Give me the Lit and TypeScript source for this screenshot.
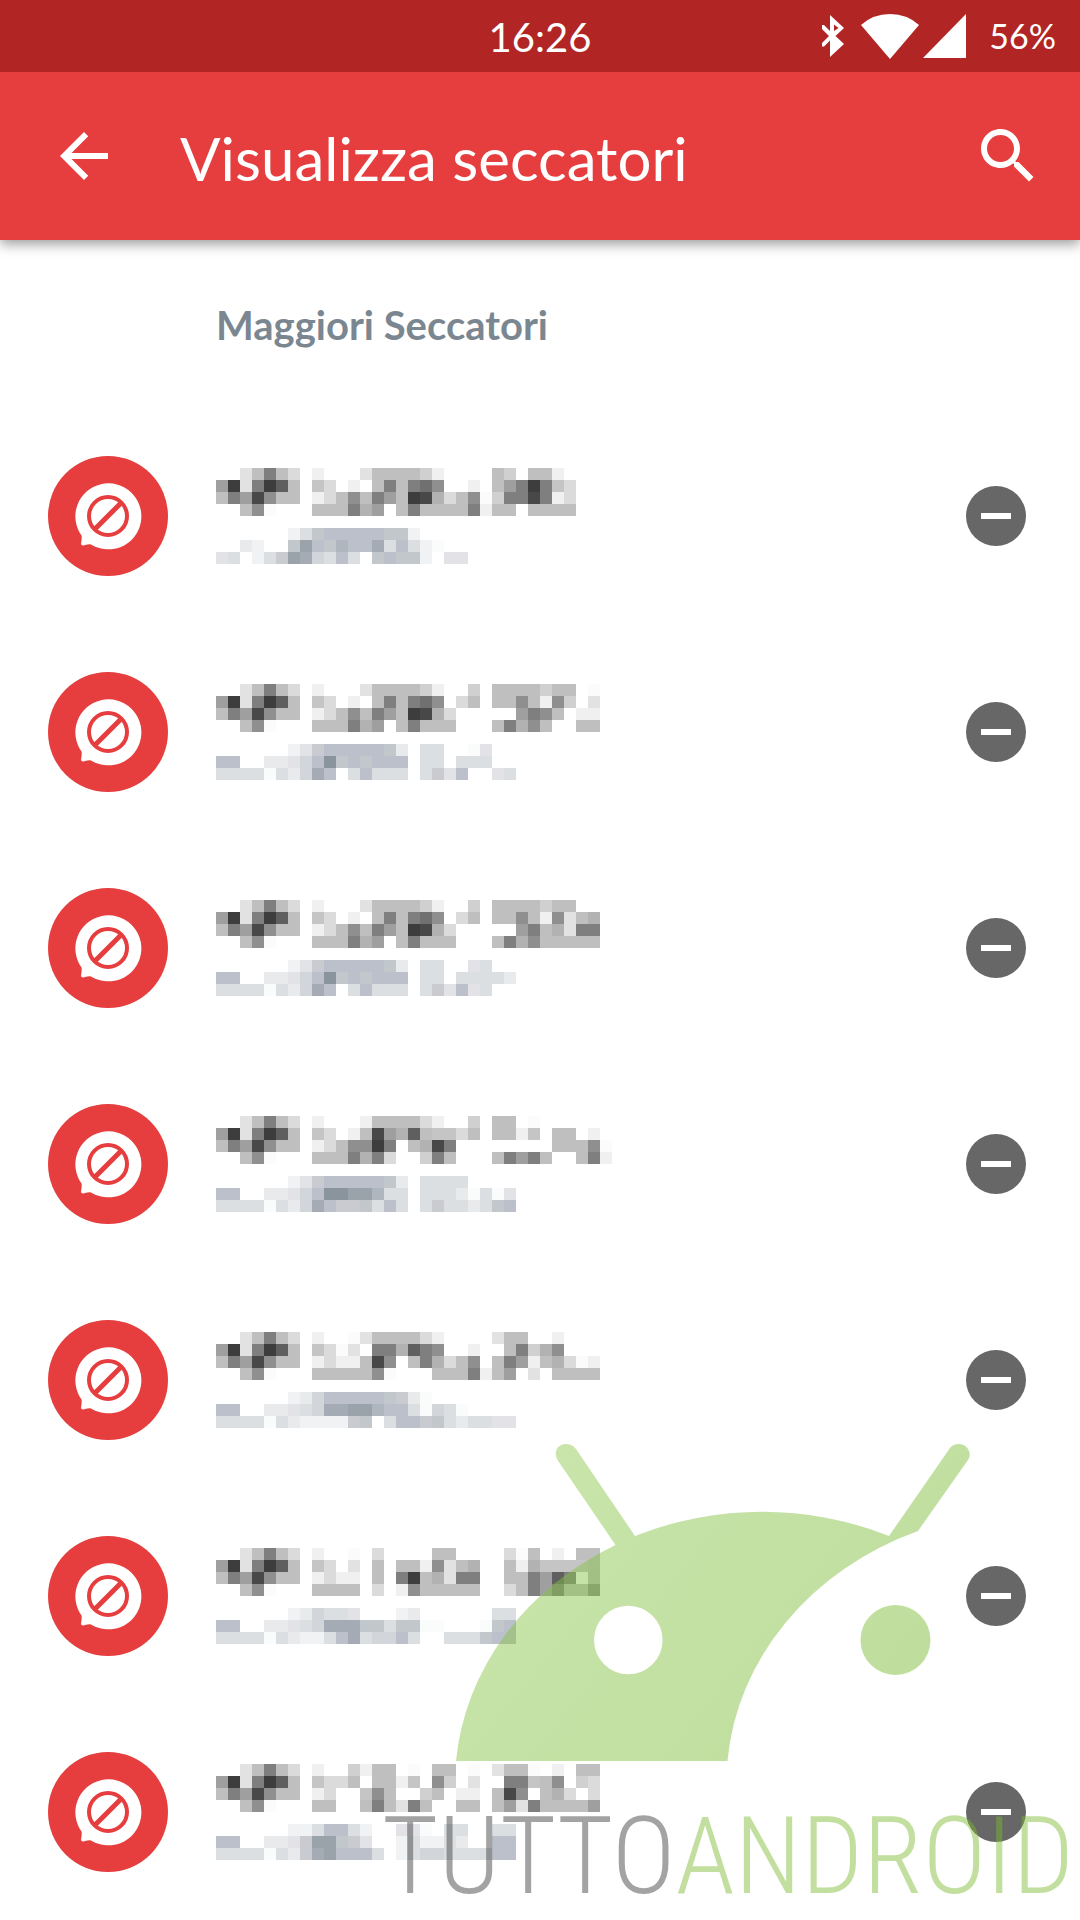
import { LitElement, html, svg, css } from "lit";
import { customElement, property } from "lit/decorators.js";

interface Blocked {
  name: string[];
  detail: string[];
}

const GREYS: Record<string, string> = {
  "1": "#fbfbfb", "2": "#f0f0f0", "3": "#e2e2e2", "4": "#dbdbdb", "5": "#d0d0d0",
  "6": "#c5c5c5", "7": "#bfbfbf", "8": "#b2b2b2", "9": "#9f9f9f", A: "#8f8f8f",
  B: "#7f7f7f", C: "#707070", D: "#5f5f5f", E: "#484848", F: "#3d3d3d",
};

const SLATES: Record<string, string> = {
  "1": "#fafcfb", "2": "#f1f2f4", "3": "#e9eaec", "4": "#e2e2e7", "5": "#dbdfe2",
  "6": "#d2d6da", "7": "#c9cbd0", "8": "#c2c7cb", "9": "#bbc0ca", A: "#b0b6bd",
  B: "#a4abb4", C: "#9aa2aa", D: "#8a949d",
};

/* Every number opens with the same country prefix. */
const PREFIX = ["..37B74.", "9F3BFD7.", "7B9EA77.", "..7A1..."];

const BLOCKED: Blocked[] = [
  {
    name: ["2...3777752....75.772.", "64.2.7B7BCA..2.79BFB64", "247A7B97FE847A15BBEB24", "777B89.7B7777B277.7777"],
    detail: ["......25899999882", "..32..8C98A99B59521", "45.257CB6595.89882.44"],
  },
  {
    name: ["2...3777752..5.7777577.1", "64.2.7B7BCA.47.77A72A5.3", "247A7B97FE84.....9BA7.22", "777B89.7B777...7B8A7..77"],
    detail: ["......2479999983.55..14", "99..33469D898999.55.555", "55551536B9.59555.5749..45"],
  },
  {
    name: ["2...3777752..5.7777577..", "64.2.7B7BCA.47.77A72A378", "247A7B97FE84.....9B783BB", "777B89.7B777...7B8A77777"],
    detail: ["......2479999983.55..45", "99..33469D898999.55.55553", "55551536B9.59555.574945"],
  },
  {
    name: ["2...2777742..5.77.1", "64.27E98D76647.7726.77.2", "247AAFB.78EB........777A1", "777B8B4..5B7...7B9B7..7B2"],
    detail: ["......2479999983.5555", "99..33469DDCCA55.55531514", "55551536B9778595.57553589"],
  },
  {
    name: ["2..13777742....377..2", "6413.BB8DBA..2..7B58A", "24227EA.7B847A.7B9278412", "77777A1...777B279.3.7777"],
    detail: ["......236999998731", "99..33456BBCCA9951651", "5555153222278.59978535544"],
  },
  {
    name: ["2..1.4....77....417.2.77", "64.3.7.772A378..72866667", "2422.7.BF783BB..77B9DB.7", "7777.4.2A77777..47B9B77A"],
    detail: ["......236554...23......55", "99..33456BBB8858811...189", "55551532259B56695..555899"],
  },
  {
    name: ["2..5277.1.77.1.3771.2.77", "6447.7726.A5.3..BB67A.54", "24..6A7..57.22.7EA.784.4", "77..7B73B7..77.793B77779"],
    detail: ["......2259952..441.55..55", "99..3347CC874..252253..99", "55551537BC9995.2566555599"],
  },
];

/* A censored line of text, drawn as square cells of flat colour. */
@customElement("mosaic-line")
export class MosaicLine extends LitElement {
  @property({ attribute: false }) rows: string[] = [];
  @property({ attribute: false }) palette: Record<string, string> = {};

  static styles = css`
    :host {
      display: block;
      line-height: 0;
    }
  `;

  render() {
    const columns = Math.max(...this.rows.map((row) => row.length));
    const height = this.rows.length;
    return html`<svg
      width=${columns * 12}
      height=${height * 12}
      viewBox="0 0 ${columns} ${height}"
      shape-rendering="crispEdges"
      aria-hidden="true"
    >
      ${this.rows.map((row, y) =>
        [...row].map((cell, x) =>
          this.palette[cell]
            ? svg`<rect x=${x} y=${y} width="1" height="1" fill=${this.palette[cell]} />`
            : null
        )
      )}
    </svg>`;
  }
}

@customElement("status-bar")
export class StatusBar extends LitElement {
  static styles = css`
    :host {
      display: grid;
      grid-template-columns: 1fr auto 1fr;
      align-items: center;
      position: relative;
      z-index: 1;
      height: 72px;
      padding: 0 24px;
      background: #b12625;
      color: #fff;
    }
    .clock {
      grid-column: 2;
      padding-top: 2px;
      font-size: 40px;
      line-height: 48px;
    }
    .system {
      display: flex;
      justify-content: flex-end;
      align-items: center;
      gap: 23px;
    }
    .system svg {
      display: block;
      fill: #fff;
    }
    .battery {
      font-size: 34px;
      line-height: 40px;
    }
  `;

  render() {
    return html`
      <time class="clock">16:26</time>
      <div class="system">
        <svg width="144" height="48" viewBox="822 12 144 48" aria-hidden="true">
          <path
            fill-rule="evenodd"
            d="M830 15L844 28L835.5 36L844 44L830 57V40.500L824 46.500H822V43L829 36L822 29V25H824L830 31ZM834 24.500V31L838.500 28Z"
          />
          <path d="M861 25Q873 14 890 14Q907 14 919 25L890 59Z" />
          <path d="M923 58L966 14V58Z" />
        </svg>
        <span class="battery">56%</span>
      </div>
    `;
  }
}

@customElement("top-bar")
export class TopBar extends LitElement {
  static styles = css`
    :host {
      display: flex;
      align-items: center;
      height: 168px;
      padding: 0 36px 0 48px;
      box-sizing: border-box;
      background: #e63e3e;
      color: #fff;
      box-shadow: 0 4px 12px rgba(0, 0, 0, 0.4);
    }
    .action {
      flex: none;
      padding: 0;
      border: 0;
      background: none;
      cursor: pointer;
    }
    .action svg {
      display: block;
      fill: #fff;
    }
    .title {
      flex: 1;
      margin: 0 0 0 60px;
      padding-top: 4px;
      font-size: 60px;
      font-weight: 400;
      line-height: 72px;
    }
  `;

  render() {
    return html`
      <button class="action" aria-label="Indietro">
        <svg width="72" height="72" viewBox="0 0 24 24">
          <path d="M20 11H7.830l5.590-5.590L12 4l-8 8 8 8 1.410-1.410L7.830 13H20z" />
        </svg>
      </button>
      <h1 class="title">Visualizza seccatori</h1>
      <button class="action" aria-label="Cerca">
        <svg width="72" height="72" viewBox="0 0 24 24">
          <path
            d="M15.500 14h-.79l-.28-.27C15.410 12.590 16 11.110 16 9.500 16 5.910 13.090 3 9.500 3S3 5.910 3 9.500 5.910 16 9.500 16c1.610 0 3.090-.59 4.230-1.570l.27.28v.79l5 4.990L20.490 19l-4.990-5zm-6 0C7.010 14 5 11.990 5 9.500S7.010 5 9.500 5 14 7.010 14 9.500 11.990 14 9.500 14z"
          />
        </svg>
      </button>
    `;
  }
}

@customElement("blocked-row")
export class BlockedRow extends LitElement {
  @property({ attribute: false }) entry!: Blocked;

  static styles = css`
    :host {
      display: flex;
      align-items: center;
      height: 216px;
      padding: 0 54px 0 48px;
      box-sizing: border-box;
    }
    .badge,
    .remove {
      flex: none;
    }
    .badge,
    .remove svg {
      display: block;
    }
    .lines {
      flex: 1;
      display: grid;
      gap: 12px;
      margin-left: 48px;
    }
    .remove {
      padding: 0;
      border: 0;
      background: none;
      cursor: pointer;
    }
  `;

  render() {
    return html`
      <svg class="badge" width="120" height="120" viewBox="0 0 120 120" aria-hidden="true">
        <circle cx="60" cy="60" r="60" fill="#e63e3e" />
        <path
          fill="#fff"
          d="M33.500 79.500A33 33 0 1 1 43 88.400C39 87.500 36.500 90 34 89.300C31.800 88.500 34.500 84 33.500 79.500Z"
        />
        <circle cx="60" cy="60" r="19" fill="none" stroke="#e63e3e" stroke-width="4" />
        <path d="M46.500 73.500L73.500 46.500" stroke="#e63e3e" stroke-width="5" />
      </svg>
      <div class="lines">
        <mosaic-line .rows=${this.entry.name.map((row, i) => PREFIX[i] + row)} .palette=${GREYS}></mosaic-line>
        <mosaic-line .rows=${this.entry.detail} .palette=${SLATES}></mosaic-line>
      </div>
      <button class="remove" aria-label="Rimuovi">
        <svg width="60" height="60" viewBox="0 0 60 60">
          <circle cx="30" cy="30" r="30" fill="#676767" />
          <path d="M15 27H45V33H15Z" fill="#fff" />
        </svg>
      </button>
    `;
  }
}

@customElement("brand-mark")
export class BrandMark extends LitElement {
  static styles = css`
    :host {
      display: flex;
      flex-direction: column;
      align-items: flex-end;
      opacity: 0.46;
      pointer-events: none;
    }
    .robot {
      display: block;
      margin-right: 110px;
    }
    .word {
      display: flex;
      padding: 31px 6px 0 0;
      font-family: "Roboto Condensed", "Liberation Sans Narrow", sans-serif;
      font-size: 108px;
      font-weight: 300;
      line-height: 128px;
      color: #393939;
    }
    .green {
      color: #7cbb32;
    }
  `;

  render() {
    return html`
      <svg class="robot" width="515" height="318" viewBox="455 1443 515 318" aria-hidden="true">
        <defs>
          <linearGradient id="leaf" x1="0" y1="0" x2="1" y2="0.500">
            <stop offset="0" stop-color="#8eca4e" />
            <stop offset="1" stop-color="#75b82c" />
          </linearGradient>
        </defs>
        <path
          fill="url(#leaf)"
          fill-rule="evenodd"
          d="M456 1761A308 272 0 0 1 615.500 1545L557.500 1460C552 1449 561 1443 566 1444Q572 1444 576 1449L635 1536A308 272 0 0 1 889 1536L950 1448Q953 1444 959 1444C966 1444 973 1452 968 1460L918 1531A308 272 0 0 0 727.500 1761ZM594 1640a34.300 34.300 0 1 0 68.600 0a34.300 34.300 0 1 0 -68.600 0ZM860.500 1640a35 35 0 1 0 70 0a35 35 0 1 0 -70 0Z"
        />
      </svg>
      <div class="word"><span>TUTTO</span><span class="green">ANDROID</span></div>
    `;
  }
}

@customElement("app-root")
export class AppRoot extends LitElement {
  static styles = css`
    :host {
      display: block;
      position: relative;
      background: #fff;
      font-family: Lato, sans-serif;
    }
    .heading {
      margin: 0;
      padding: 61px 48px 59px 216px;
      font-size: 40px;
      font-weight: 700;
      line-height: 48px;
      color: #7a8791;
    }
    .list {
      margin: 0;
      padding: 0;
      list-style: none;
    }
    .overlay {
      position: absolute;
      right: 0;
      bottom: 0;
    }
  `;

  render() {
    return html`
      <status-bar></status-bar>
      <top-bar></top-bar>
      <main>
        <h2 class="heading">Maggiori Seccatori</h2>
        <ul class="list">
          ${BLOCKED.map((entry) => html`<li><blocked-row .entry=${entry}></blocked-row></li>`)}
        </ul>
      </main>
      <brand-mark class="overlay"></brand-mark>
    `;
  }
}
